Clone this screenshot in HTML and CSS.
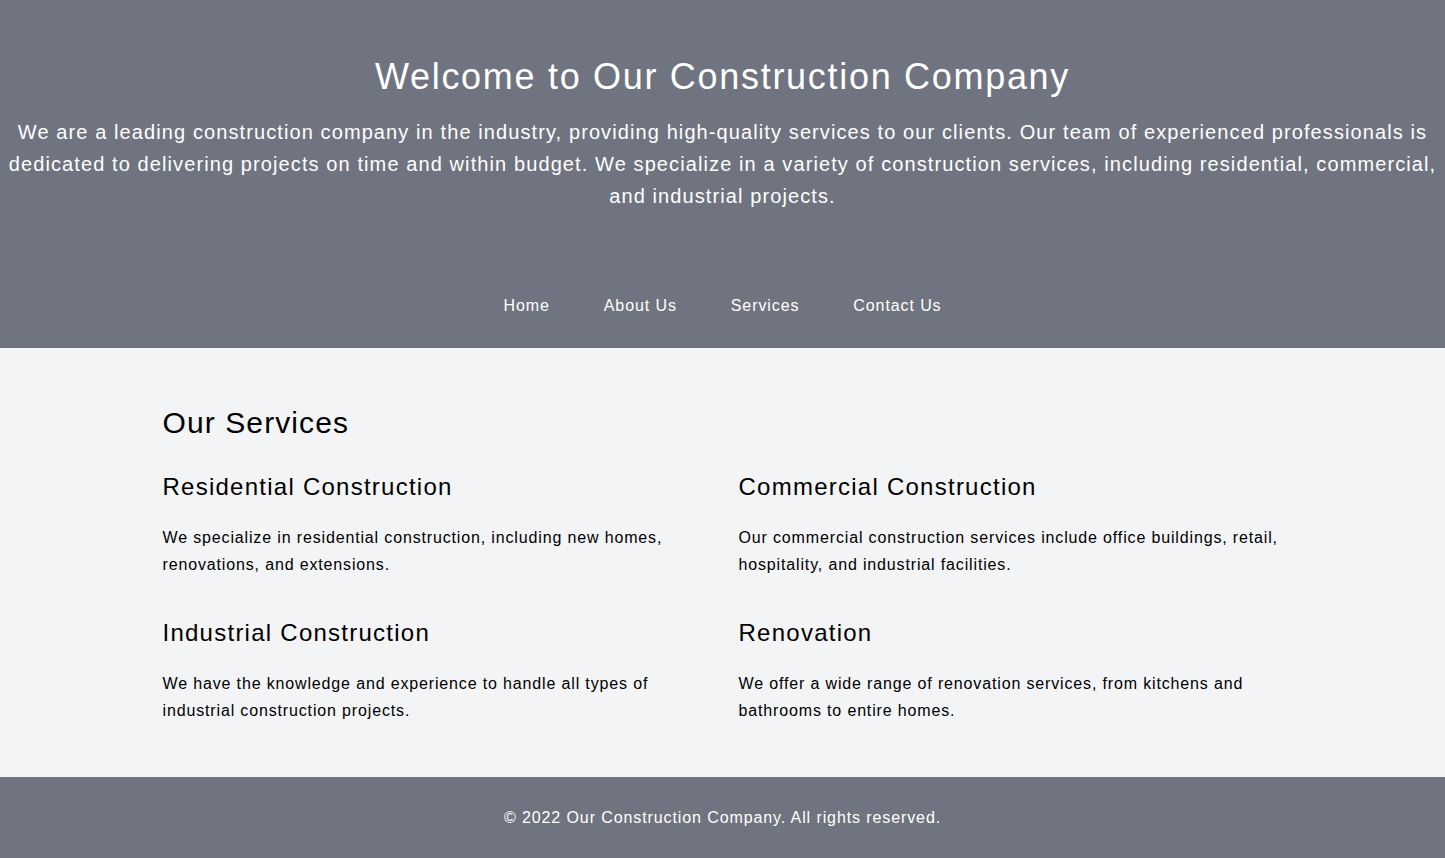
FILE: index.html
```html
<!DOCTYPE html>
<html lang="en">
<head>
<meta charset="utf-8">
<title>Our Construction Company</title>
<link rel="stylesheet" href="styles.css">
</head>
<body>
<header class="hero">
  <div class="hero-inner">
    <h1 class="hero-title">Welcome to Our Construction Company</h1>
    <p class="hero-lead">We are a leading construction company in the industry, providing high-quality services to our clients. Our team of experienced professionals is dedicated to delivering projects on time and within budget. We specialize in a variety of construction services, including residential, commercial, and industrial projects.</p>
  </div>
  <nav class="nav">
    <a href="#" class="nav-link">Home</a>
    <a href="#" class="nav-link">About Us</a>
    <a href="#" class="nav-link">Services</a>
    <a href="#" class="nav-link">Contact Us</a>
  </nav>
</header>
<main class="services">
  <div class="container">
    <h2 class="section-title">Our Services</h2>
    <div class="grid">
      <div class="card">
        <h3 class="card-title">Residential Construction</h3>
        <p class="card-text">We specialize in residential construction, including new homes, renovations, and extensions.</p>
      </div>
      <div class="card">
        <h3 class="card-title">Commercial Construction</h3>
        <p class="card-text">Our commercial construction services include office buildings, retail, hospitality, and industrial facilities.</p>
      </div>
      <div class="card">
        <h3 class="card-title">Industrial Construction</h3>
        <p class="card-text">We have the knowledge and experience to handle all types of industrial construction projects.</p>
      </div>
      <div class="card">
        <h3 class="card-title">Renovation</h3>
        <p class="card-text">We offer a wide range of renovation services, from kitchens and bathrooms to entire homes.</p>
      </div>
    </div>
  </div>
</main>
<footer class="footer">
  <p class="footer-text">© 2022 Our Construction Company. All rights reserved.</p>
</footer>
</body>
</html>
```

FILE: styles.css
```css
* { box-sizing: border-box; }
html, body { margin: 0; padding: 0; }
body {
  font-family: "Liberation Sans", Arial, sans-serif;
  letter-spacing: 0.9px;
  background: #f3f4f6;
  color: #000;
}
.hero {
  background: #6f7480;
  color: #fff;
  padding-top: 57px;
}
.hero-inner { text-align: center; padding: 0 8px; }
.hero-title {
  margin: 0;
  font-size: 36px;
  line-height: 40px;
  font-weight: 400;
  letter-spacing: 1.7px;
}
.hero-lead {
  margin: 19px 0 0;
  font-size: 20px;
  line-height: 32px;
  letter-spacing: 1.1px;
}
.nav {
  display: flex;
  justify-content: center;
  gap: 54px;
  padding: 82px 0 30px;
}
.nav-link {
  color: #fff;
  text-decoration: none;
  font-size: 16px;
  line-height: 24px;
}
.services { padding: 57px 0 53px; }
.container {
  max-width: 1152px;
  margin: 0 auto;
  padding: 0 16px;
}
.section-title {
  margin: 0 0 30px;
  font-size: 30px;
  line-height: 36px;
  font-weight: 400;
  letter-spacing: 1.1px;
}
.grid {
  display: grid;
  grid-template-columns: 1fr 1fr;
  column-gap: 32px;
  row-gap: 39px;
}
.card-title {
  margin: 0 0 21px;
  font-size: 24px;
  line-height: 32px;
  font-weight: 400;
  letter-spacing: 1.25px;
}
.card-text {
  margin: 0;
  font-size: 16px;
  line-height: 27px;
  letter-spacing: 0.85px;
}
.footer {
  background: #6f7480;
  color: #fff;
  padding: 29px 0 28px;
  text-align: center;
}
.footer-text { margin: 0; font-size: 16px; line-height: 24px; }
```
